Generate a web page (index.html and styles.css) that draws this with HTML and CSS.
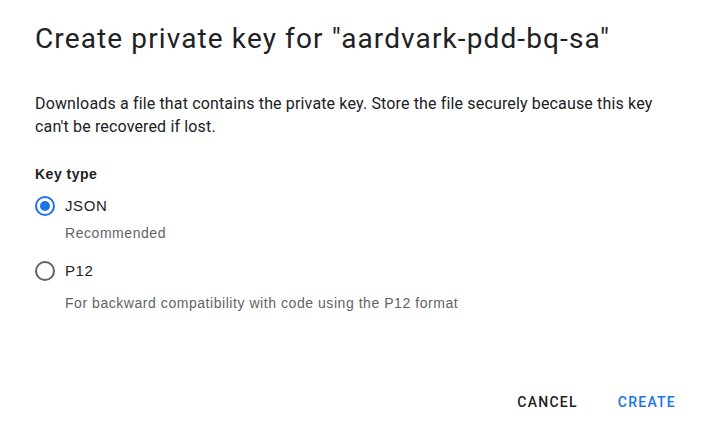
FILE: index.html
```html
<!DOCTYPE html>
<html>
<head>
<meta charset="utf-8">
<link rel="stylesheet" href="styles.css">
</head>
<body>
<div class="dialog">
  <h1 class="title">Create private key for "aardvark-pdd-bq-sa"</h1>
  <p class="desc">Downloads a file that contains the private key. Store the file securely because this key can't be recovered if lost.</p>
  <div class="label">Key type</div>
  <div class="option">
    <span class="radio checked"></span>
    <span class="opt-text">JSON</span>
  </div>
  <div class="hint hint-first">Recommended</div>
  <div class="option option-second">
    <span class="radio"></span>
    <span class="opt-text">P12</span>
  </div>
  <div class="hint">For backward compatibility with code using the P12 format</div>
  <div class="actions">
    <button class="btn btn-cancel">CANCEL</button>
    <button class="btn btn-create">CREATE</button>
  </div>
</div>
</body>
</html>
```
FILE: styles.css
```css
html, body {
  margin: 0;
  padding: 0;
  background: #ffffff;
}
.dialog {
  width: 711px;
  height: 443px;
  box-sizing: border-box;
  padding: 23px 35px 0 35px;
  font-family: Roboto, "Liberation Sans", sans-serif;
  color: #202124;
  display: flex;
  flex-direction: column;
}
.title {
  margin: 0;
  font-size: 28px;
  line-height: 32px;
  font-weight: 400;
  letter-spacing: 1.12px;
  color: #202124;
}
.desc {
  margin: 37px 0 0 0;
  font-size: 16px;
  line-height: 23px;
  letter-spacing: 0.15px;
  color: #202124;
}
.label {
  margin-top: 26px;
  font-family: "Liberation Sans", Arial, sans-serif;
  font-weight: 700;
  font-size: 14px;
  line-height: 20px;
  letter-spacing: 0.5px;
  color: #202124;
}
.option {
  margin-top: 12px;
  display: flex;
  align-items: center;
  height: 20px;
}
.option-second {
  margin-top: 18px;
}
.radio {
  width: 20px;
  height: 20px;
  box-sizing: border-box;
  border: 2px solid #5f6368;
  border-radius: 50%;
  flex: none;
  display: flex;
  align-items: center;
  justify-content: center;
}
.radio.checked {
  border-color: #1a73e8;
}
.radio.checked::after {
  content: "";
  width: 10px;
  height: 10px;
  border-radius: 50%;
  background: #1a73e8;
}
.opt-text {
  margin-left: 10px;
  font-family: "Liberation Sans", Arial, sans-serif;
  font-size: 15px;
  line-height: 20px;
  letter-spacing: 0.6px;
  color: #202124;
}
.hint {
  margin-top: 12px;
  margin-left: 30px;
  font-family: "Liberation Sans", Arial, sans-serif;
  font-size: 14px;
  line-height: 20px;
  letter-spacing: 0.55px;
  color: #5f6368;
}
.hint-first {
  margin-top: 7px;
}
.actions {
  margin-top: auto;
  margin-bottom: 23px;
  display: flex;
  justify-content: flex-end;
  gap: 24px;
  margin-right: -8px;
}
.btn {
  border: none;
  background: transparent;
  font-family: Roboto, "Liberation Sans", sans-serif;
  font-weight: 500;
  font-size: 14px;
  line-height: 36px;
  height: 36px;
  padding: 0 8px;
  letter-spacing: 1.25px;
}
.btn-cancel {
  color: #202124;
}
.btn-create {
  color: #1a73e8;
}
```
